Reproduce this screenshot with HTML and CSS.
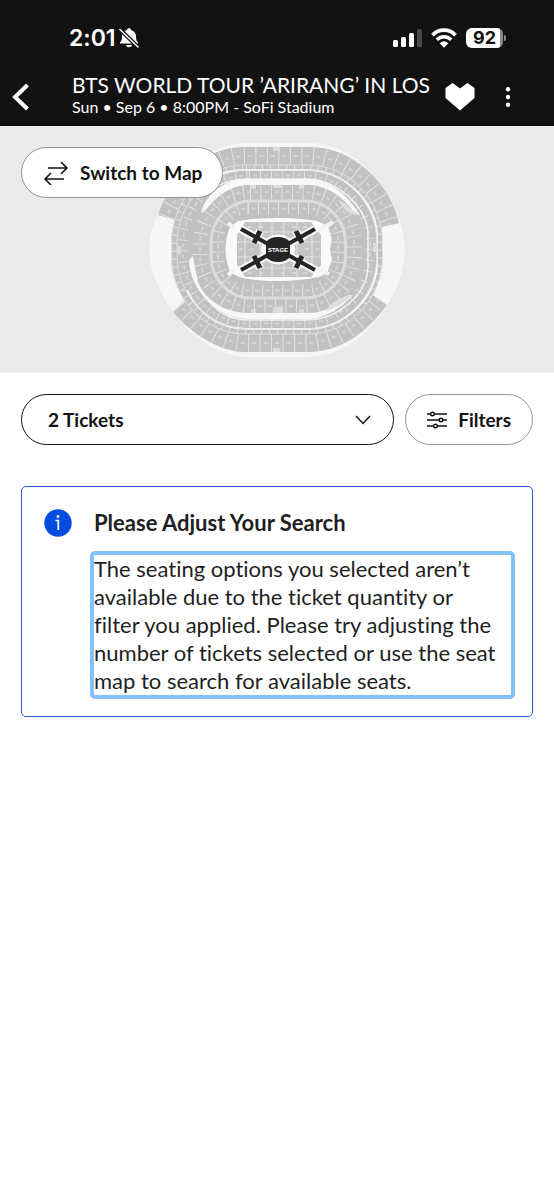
FILE: index.html
```html
<!DOCTYPE html>
<html lang="en">

<head>
    <meta charset="UTF-8">
    <meta name="viewport" content="width=device-width, initial-scale=1.0">
    <title>BTS WORLD TOUR 'ARIRANG' IN LOS ANGELES</title>
    <link rel="stylesheet" href="styles.css">
</head>

<body>

    <div class="wrapper">
        <header class="header">
            <div class="statusBar">
                <div class="statusTime">
                    <span>2:01</span>
                    <svg class="bell" viewBox="0 0 20 20" aria-hidden="true">
                        <path d="M1 15.500V14.300C3 12.500 3 11 3 8C3 4.500 6 2.500 8 2C8 -.3 12 -.3 12 2C14 2.500 17 4.500 17 8C17 11 17 12.500 19 14.300V15.500Z" fill="#fff" />
                        <path d="M7 17H13C12.500 20 7.500 20 7 17Z" fill="#fff" />
                        <path d="M1 1.500L19 19" stroke="#121212" stroke-width="4" />
                        <path d="M1 1.500L19 19" stroke="#fff" stroke-width="1.600" stroke-linecap="round" />
                    </svg>
                </div>
                <div class="statusIcons">
                    <svg class="signal" viewBox="0 0 29 18" aria-hidden="true">
                        <rect x="0" y="11" width="5" height="7" rx="1.500" fill="#fff" />
                        <rect x="8" y="8" width="5" height="10" rx="1.500" fill="#fff" />
                        <rect x="16" y="4" width="5" height="14" rx="1.500" fill="#fff" />
                        <rect x="24" y="0" width="5" height="18" rx="1.500" fill="#484848" />
                    </svg>
                    <svg class="wifi" viewBox="0 0 24 18" aria-hidden="true">
                        <path d="M1.300 6.300C7.500 .3 16.500 .3 22.700 6.300" fill="none" stroke="#fff" stroke-width="3.400" />
                        <path d="M5.300 10.600C9.200 6.900 14.800 6.900 18.700 10.600" fill="none" stroke="#fff" stroke-width="3.200" />
                        <path d="M8 13.800Q12 10.200 16 13.800L12 18Z" fill="#fff" />
                    </svg>
                    <div class="battery"><span class="batteryLevel">92</span></div>
                </div>
            </div>
            <div class="titleBar">
                <button class="iconBtn backBtn" type="button" aria-label="Back">
                    <svg width="18" height="28" viewBox="0 0 18 28" aria-hidden="true">
                        <path d="M15.500 2L3 14L15.500 26" fill="none" stroke="#fff" stroke-width="4" />
                    </svg>
                </button>
                <div class="titleText">
                    <h1>BTS WORLD TOUR ’ARIRANG’ IN LOS</h1>
                    <p>Sun • Sep 6 • 8:00PM - SoFi Stadium</p>
                </div>
                <button class="iconBtn heartBtn" type="button" aria-label="Favorite">
                    <svg width="30" height="28" viewBox="0 0 30 28" aria-hidden="true">
                        <path d="M7.500 0L15 5.500L22.500 0L29.500 5V15L15 27.500L.5 15V5Z" fill="#fff" />
                    </svg>
                </button>
                <button class="iconBtn moreBtn" type="button" aria-label="More options">
                    <svg width="6" height="20" viewBox="0 0 6 20" aria-hidden="true">
                        <circle cx="3" cy="2.300" r="2.200" fill="#fff" />
                        <circle cx="3" cy="10" r="2.200" fill="#fff" />
                        <circle cx="3" cy="17.700" r="2.200" fill="#fff" />
                    </svg>
                </button>
            </div>
        </header>

        <section class="mapBox">
            <svg class="seatMap" viewBox="148 142 258 216" role="img" aria-label="Seat map">
                <path d="M149 250C149 284 188 356 248 357H308C366 356 405 290 405 250C405 208 366 143 308 143H248C188 143 149 212 149 250Z" fill="#f6f6f6" />

                <!-- upper deck -->
                <path d="M158 215C168 182 203 147 243 147H310C352 147 390 182 399 223L382 227L320 172H240L175 220Z" fill="#c1c1c1" />
                <path d="M173 312C190 333 220 352 245 352H307C342 352 367 332 387 305L371 294L310 334H240L187 298Z" fill="#c1c1c1" />
                <path class="cuts" stroke-width="18" stroke-dasharray="1 10.500" d="M167 217C178 187 210 156 245 156H308C346 156 380 187 390 225" />
                <path class="cuts" stroke-width="18" stroke-dasharray="1 10.500" d="M180 305C198 326 222 343 245 343H305C336 343 359 325 379 299" />
                <path class="labels" stroke-dasharray="4 7.500" stroke-dashoffset="-4" d="M167 217C178 187 210 156 245 156H308C346 156 380 187 390 225" />
                <path class="labels" stroke-dasharray="4 7.500" stroke-dashoffset="-4" d="M180 305C198 326 222 343 245 343H305C336 343 359 325 379 299" />

                <!-- suites -->
                <rect x="171" y="165" width="212" height="169" rx="74" ry="78" fill="#c1c1c1" />
                <rect class="cuts thin" x="171.500" y="165" width="211" height="169" rx="74" ry="78" />
                <rect class="cuts" x="174" y="167.500" width="206" height="164" rx="72" ry="76" stroke-width="5" stroke-dasharray="1 7" />
                <path d="M218 175Q230 170 246 170H306C346 170 377 204 377 236V264C377 296 346 329 306 329H248C216 329 196 310 187 290" fill="none" stroke="#fafafa" stroke-width="1.800" />
                <rect class="cuts thin" x="177" y="170" width="200" height="159" rx="71" ry="74" />
                <rect class="cuts" x="183" y="175.500" width="187" height="148" rx="66" ry="70" stroke-width="9" stroke-dasharray="1 10" />
                <rect class="labels" x="183" y="175.500" width="187" height="148" rx="66" ry="70" stroke-dasharray="4 7" stroke-dashoffset="-4" />
                <path d="M218 186Q231 179 248 179H306C337 179 368 208 368 234V266C368 294 338 320 306 320H248C218 320 202 296 199 280" fill="none" stroke="#f4f4f4" stroke-width="1.400" />

                <!-- walkway and lower bowl -->
                <path d="M201 213C205 195 224 179 248 179H308C330 179 351 198 360 216Q345 205 335 200L230 195Z" fill="#f8f8f8" />
                <path d="M189 260C190 291 218 319 248 319H308C326 319 343 306 353 295L240 302L205 279Q196 270 193 256Z" fill="#f8f8f8" />
                <path d="M248 185H308C336 185 361 213 362 235V264C361 289 336 313 308 313H250C225 313 205 300 198 282L193 257V244C194 216 221 185 248 185Z" fill="#c1c1c1" />
                <path d="M337 199Q348 205 359 216L347 212Z" fill="#dedede" />
                <path d="M325 311Q337 296 352 295Q340 308 325 311Z" fill="#dedede" />
                <rect class="cuts" x="200" y="192" width="154" height="114" rx="50" ry="52" stroke-width="15" stroke-dasharray="1 9.500" />
                <rect class="labels" x="200" y="192" width="154" height="114" rx="50" ry="52" stroke-dasharray="4 6.500" stroke-dashoffset="-4" />
                <rect x="211" y="201" width="134.500" height="97" rx="40" ry="42" fill="#c1c1c1" stroke="#dcdcdc" stroke-width="3" />
                <rect class="cuts" x="218" y="208.500" width="120" height="82" rx="30" ry="32" stroke-width="12" stroke-dasharray="1 9" />
                <rect class="labels" x="218" y="208.500" width="120" height="82" rx="30" ry="32" stroke-dasharray="4 6" stroke-dashoffset="-4" />

                <!-- entrances -->
                <path d="M273 147H280V151H273ZM251 185H256V189H251ZM273 185H281V188H273ZM299 185H304V189H299ZM251 309H256V313H251ZM273 307H283V313H273ZM299 309H304V313H299ZM273 348H280V352H273ZM177 246H181V254H177ZM373 243H377V252H373Z" fill="#dcdcdc" />

                <!-- floor -->
                <path d="M230 227L238 221Q255 218 278 218Q302 218 317 221L328 226L332 239L330 249L332 260L327 273L319 277Q300 281 278 281Q250 281 237 276L230 272Q221 249 230 227Z" fill="#fafafa" />
                <path d="M228 223L235 229M228 275L235 269M320 230L333 222M320 270L329 274" stroke="#f4f4f4" stroke-width="4" />
                <path d="M245 222H311L321 235V265L311 277H245L237 265V235Z" fill="#c4c4c4" />
                <path d="M237 242H321M237 257H321M245 232H311M245 268H311M260 222V277M272 222V277M284 222V277M297 222V277M245 235V264M312 235V264" fill="none" stroke="#e4e4e4" />
                <path d="M248 227H309M248 273H309M239 249H319" stroke="#d6d6d6" stroke-width="2" stroke-dasharray="4 7" />

                <!-- stage -->
                <path d="M239 228L317 271M239 271L317 228M254 242L260 231M302 242L296 231M254 257L260 268M302 257L296 268" fill="none" stroke="#fafafa" stroke-width="8" />
                <ellipse cx="278" cy="249.500" rx="17" ry="15" fill="#fafafa" />
                <path d="M241 229L315 270M241 270L315 229" stroke="#252525" stroke-width="4" />
                <path d="M254 243L260 231M302 243L296 231M254 256L260 268M302 256L296 268" stroke="#252525" stroke-width="5" />
                <path d="M266 242Q270 237 278 237Q286 237 290 242V257Q286 262 278 262Q270 262 266 257Z" fill="#252525" />
                <text class="stageText" x="278" y="252" text-anchor="middle">STAGE</text>
            </svg>
            <button class="pill switchBtn" type="button">
                <svg width="26" height="24" viewBox="0 0 26 24" aria-hidden="true">
                    <path d="M5 7H24M18 1L24 7L18 13M21 18H2M8 12L2 18L8 24" fill="none" stroke="#121212" stroke-width="1.600" />
                </svg>
                <span>Switch to Map</span>
            </button>
        </section>

        <main class="main">
            <div class="filterRow">
                <div class="selectWrap">
                    <select class="pill ticketSelect" aria-label="Ticket quantity">
                        <option>1 Ticket</option>
                        <option selected>2 Tickets</option>
                        <option>3 Tickets</option>
                        <option>4 Tickets</option>
                    </select>
                    <svg class="chevron" width="16" height="10" viewBox="0 0 16 10" aria-hidden="true">
                        <path d="M1 1L8 8.500L15 1" fill="none" stroke="#121212" stroke-width="1.400" />
                    </svg>
                </div>
                <button class="pill filterBtn" type="button">
                    <svg width="20" height="18" viewBox="0 0 20 18" aria-hidden="true">
                        <path d="M0 3H20M0 9H20M0 15H20" stroke="#121212" stroke-width="1.500" />
                        <g fill="#fff" stroke="#121212" stroke-width="1.400">
                            <circle cx="5.500" cy="3" r="1.800" />
                            <circle cx="14" cy="9" r="1.800" />
                            <circle cx="8.500" cy="15" r="1.800" />
                        </g>
                    </svg>
                    <span>Filters</span>
                </button>
            </div>

            <div class="notice">
                <svg class="infoIcon" viewBox="0 0 28 28" aria-hidden="true">
                    <circle cx="14" cy="14" r="13.700" fill="#024ddf" />
                    <circle cx="14" cy="7.500" r="1.400" fill="#fff" />
                    <path d="M11.500 11.500H14.300V21" fill="none" stroke="#fff" stroke-width="1.700" />
                </svg>
                <div class="noticeBody">
                    <h2>Please Adjust Your Search</h2>
                    <p tabindex="-1">The seating options you selected aren’t<br> available due to the ticket quantity or<br> filter you applied. Please try adjusting the<br> number of tickets selected or use the seat<br> map to search for available seats.</p>
                </div>
            </div>
        </main>
    </div>

</body>

</html>
```
FILE: styles.css
```css
* {
    margin: 0;
    padding: 0;
    box-sizing: border-box;
}

body {
    background: #fff;
    color: #1f1f1f;
    font-family: Lato, "Open Sans", sans-serif;
    font-variant-ligatures: none;
}

button,
select {
    font-family: inherit;
    cursor: pointer;
}

.wrapper {
    width: 100%;
    min-height: 100vh;
}

.header {
    background: #121212;
    color: #fff;
}

.statusBar {
    display: flex;
    justify-content: space-between;
    align-items: center;
    padding: 24px 51px 10px 69px;
    font-family: Inter, "Liberation Sans", sans-serif;
}

.statusTime {
    display: flex;
    align-items: center;
    gap: 3px;
    font-size: 23px;
    font-weight: 600;
    line-height: 28px;
}

.bell {
    width: 20px;
    height: 20px;
}

.statusIcons {
    display: flex;
    align-items: center;
    gap: 9px;
}

.signal {
    width: 29px;
    height: 18px;
}

.wifi {
    width: 26px;
    height: 20px;
}

.battery {
    position: relative;
    width: 37px;
    height: 20px;
    border-radius: 6px;
    background: linear-gradient(to right, #fff 92%, #8a8a8a 92%);
    color: #121212;
    text-align: center;
    font-size: 18px;
    font-weight: 700;
    line-height: 20px;
}

.battery::after {
    content: "";
    position: absolute;
    right: -3px;
    top: 7px;
    width: 2px;
    height: 6px;
    border-radius: 0 2px 2px 0;
    background: #8a8a8a;
}

.titleBar {
    display: flex;
    align-items: center;
    height: 64px;
    padding-right: 30px;
}

.iconBtn {
    display: flex;
    align-items: center;
    justify-content: center;
    flex-shrink: 0;
    height: 44px;
    padding-top: 6px;
    border: 0;
    background: none;
}

.backBtn {
    width: 72px;
    padding-left: 12px;
    justify-content: flex-start;
}

.titleText {
    flex: 1;
    min-width: 0;
    padding-top: 2px;
    white-space: nowrap;
    overflow: hidden;
}

.titleText h1 {
    font-size: 21px;
    font-weight: 400;
    line-height: 24px;
}

.titleText p {
    font-size: 16px;
    line-height: 20px;
}

.heartBtn {
    width: 56px;
    padding-right: 8px;
}

.moreBtn {
    width: 32px;
}

.mapBox {
    position: relative;
    display: flex;
    justify-content: center;
    padding: 16px 20px 15px;
    background: #eaeaea;
}

.seatMap {
    width: 258px;
    height: 216px;
}

.cuts {
    fill: none;
    stroke: #e2e2e2;
}

.thin {
    stroke-width: 1px;
}

.labels {
    fill: none;
    stroke: #d4d4d4;
    stroke-width: 2px;
}

.stageText {
    fill: #fff;
    font-family: "Liberation Sans", Arial, sans-serif;
    font-size: 6px;
    font-weight: 700;
}

.pill {
    height: 51px;
    border: 1px solid #949494;
    border-radius: 26px;
    background: #fff;
    color: #121212;
    font-size: 19px;
    font-weight: 700;
}

.switchBtn {
    position: absolute;
    left: 21px;
    top: 21px;
    display: flex;
    align-items: center;
    gap: 11px;
    padding: 0 20px 0 21px;
}

.main {
    padding: 21px;
}

.filterRow {
    display: flex;
    gap: 11px;
}

.selectWrap {
    position: relative;
    flex: 1;
}

.ticketSelect {
    width: 100%;
    padding: 0 50px 0 26px;
    border-color: #121212;
    appearance: none;
}

.chevron {
    position: absolute;
    right: 23px;
    top: 21px;
    pointer-events: none;
}

.filterBtn {
    display: flex;
    align-items: center;
    gap: 11px;
    padding: 0 21px;
}

.notice {
    display: flex;
    gap: 22px;
    margin-top: 41px;
    padding: 22px 21px 21px 22px;
    border: 1px solid #2a5bd0;
    border-radius: 5px;
}

.infoIcon {
    flex-shrink: 0;
    width: 28px;
    height: 28px;
}

.noticeBody {
    flex: 1;
}

.noticeBody h2 {
    font-size: 22px;
    font-weight: 700;
    line-height: 28px;
}

.noticeBody p {
    margin-top: 18px;
    font-size: 22px;
    line-height: 28px;
    outline: 4px solid #83c1fb;
    border-radius: 1px;
}
```
